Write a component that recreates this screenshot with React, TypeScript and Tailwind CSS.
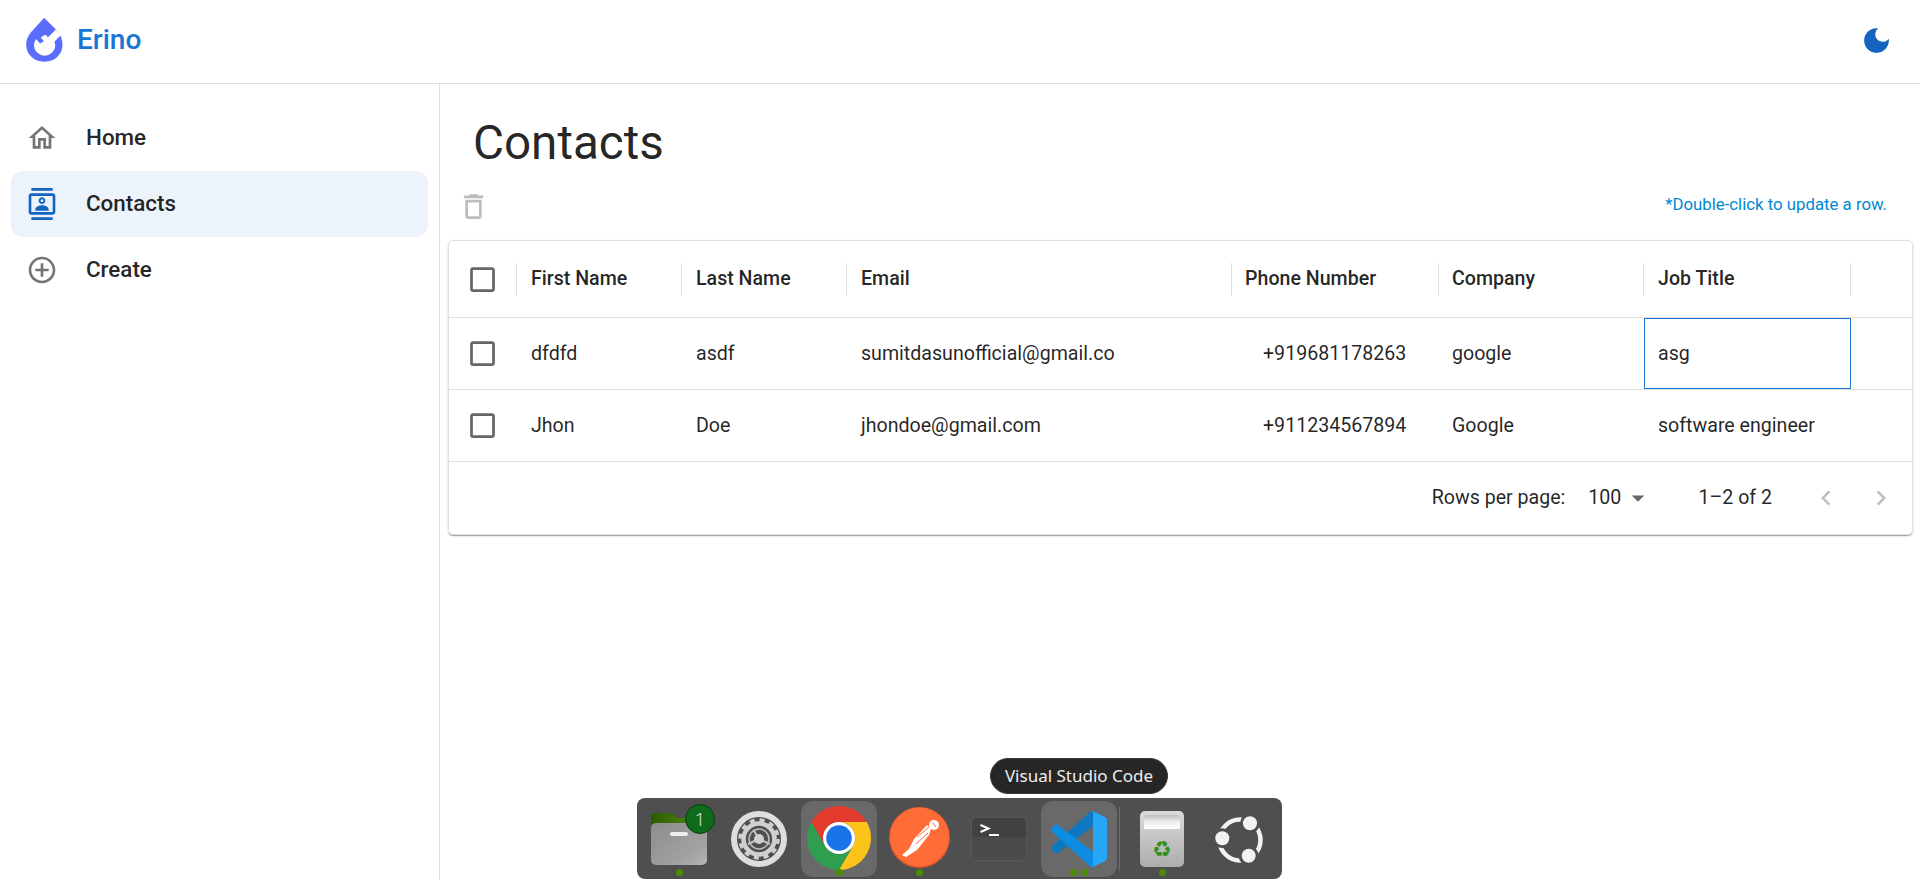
import { ReactNode } from "react";

const MuiIcon = ({ d, className }: { d: string; className: string }) => (
  <svg viewBox="0 0 24 24" fill="currentColor" className={className}>
    <path d={d} />
  </svg>
);

const checkboxPath =
  "M19 5v14H5V5h14m0-2H5c-1.1 0-2 .9-2 2v14c0 1.1.9 2 2 2h14c1.1 0 2-.9 2-2V5c0-1.1-.9-2-2-2z";

const navItems = [
  {
    label: "Home",
    color: "text-[#757575]",
    d: "m12 5.69 5 4.5V18h-2v-6H9v6H7v-7.81l5-4.5M12 3 2 12h3v8h6v-6h2v6h6v-8h3L12 3z",
  },
  {
    label: "Contacts",
    active: true,
    color: "text-[#1565c0]",
    d: "M20 0H4v2h16V0zM4 24h16v-2H4v2zM20 4H4c-1.1 0-2 .9-2 2v12c0 1.1.9 2 2 2h16c1.1 0 2-.9 2-2V6c0-1.1-.9-2-2-2zm0 14H4V6h16v12zm-8-6c1.38 0 2.5-1.12 2.5-2.5S13.38 7 12 7 9.5 8.12 9.5 9.5 10.62 12 12 12zm0-3.5c.55 0 1 .45 1 1s-.45 1-1 1-1-.45-1-1 .45-1 1-1zM17 15.99C17 13.9 13.69 13 12 13s-5 .9-5 2.99V17h10v-1.01z",
  },
  {
    label: "Create",
    color: "text-[#757575]",
    d: "M13 7h-2v4H7v2h4v4h2v-4h4v-2h-4V7zm-1-5C6.48 2 2 6.48 2 12s4.48 10 10 10 10-4.48 10-10S17.52 2 12 2zm0 18c-4.41 0-8-3.59-8-8s3.59-8 8-8 8 3.59 8 8-3.59 8-8 8z",
  },
];

const columns = ["First Name", "Last Name", "Email", "Phone Number", "Company", "Job Title"];

const rows = [
  ["dfdfd", "asdf", "sumitdasunofficial@gmail.co", "+919681178263", "google", "asg"],
  ["Jhon", "Doe", "jhondoe@gmail.com", "+911234567894", "Google", "software engineer"],
];

const gridCols = "grid grid-cols-[68px_165px_165px_385px_207px_205px_207px_1fr]";

// drawn in the crop's coordinates, 3 units per pixel
const Logo = () => (
  <svg viewBox="18 15 111 133" className="h-[44px] w-[37px]">
    <path
      d="M72 15 L110 52 C122 64 128 80 128 95 C128 125 105 147 73 147 C42 147 18 125 18 95 C18 78 27 64 36 54 Z"
      fill="#5b6dfd"
    />
    <circle cx="74" cy="97" r="32" fill="#fff" />
    <path d="M84 73 L107 50 L124 66 L98 92 Z" fill="#fff" />
    <path d="M72 15 L107 50 L84 73 L76 65 L62 74 L72 85 L60 92 L42 72 Z" fill="#5b6dfd" />
  </svg>
);

const FolderIcon = () => (
  <svg viewBox="0 0 56 52" className="h-[52px] w-[56px]">
    <defs>
      <linearGradient id="fbody" x1="0" y1="0" x2="1" y2="1">
        <stop offset="0" stopColor="#8c8c8c" />
        <stop offset="0.75" stopColor="#a3a3a3" />
        <stop offset="1" stopColor="#b5b5b5" />
      </linearGradient>
      <linearGradient id="ftab" x1="0" y1="0" x2="1" y2="0">
        <stop offset="0" stopColor="#2a5c02" />
        <stop offset="1" stopColor="#5a8f14" />
      </linearGradient>
    </defs>
    <path d="M0 4a4 4 0 0 1 4-4h17l6 5h25a4 4 0 0 1 4 4v10H0z" fill="url(#ftab)" />
    <rect x="0" y="10" width="56" height="42" rx="5" fill="url(#fbody)" />
    <rect x="19" y="19" width="18" height="4" rx="2" fill="#eee" />
  </svg>
);

const GearIcon = () => (
  <svg viewBox="0 0 56 56" className="h-[56px] w-[56px]">
    <circle cx="28" cy="28" r="25" fill="none" stroke="#dedede" strokeWidth="6" />
    <circle cx="28" cy="28" r="15.5" fill="none" stroke="#d0d0d0" strokeWidth="4.5" />
    <circle cx="28" cy="28" r="19" fill="none" stroke="#d0d0d0" strokeWidth="3.5" strokeDasharray="5 4.95" />
    <circle cx="28" cy="28" r="10" fill="none" stroke="#bdbdbd" strokeWidth="1.5" />
    <path d="M22.5 19 L28 28 L17 33 M39 33 L28 28" stroke="#c4c4c4" strokeWidth="2" fill="none" />
    <circle cx="28" cy="28" r="5" fill="#cfcfcf" />
  </svg>
);

const ChromeIcon = () => {
  const sector = "M32 0A32 32 0 0 1 59.7 16H32A16 16 0 0 0 18.1 40L4.3 16A32 32 0 0 1 32 0Z";
  return (
    <svg viewBox="0 0 64 64" className="-mt-[2px] h-[64px] w-[64px]">
      <path d={sector} fill="#e33b2e" />
      <path d={sector} fill="#fcc318" transform="rotate(120 32 32)" />
      <path d={sector} fill="#2f9e4f" transform="rotate(240 32 32)" />
      <circle cx="32" cy="32" r="16" fill="#fff" />
      <circle cx="32" cy="32" r="12.8" fill="#1a73e8" />
    </svg>
  );
};

const PostmanIcon = () => (
  <svg viewBox="0 0 61 61" className="-mt-[3px] h-[61px] w-[61px]">
    <circle cx="30.5" cy="30.5" r="30.5" fill="#e0562a" />
    <circle cx="30.5" cy="30" r="29.5" fill="#ff6c37" />
    <path d="M38 18 L25 32 L20 42 L13 48 L17 50 L28 43 L40 28 L42 21.5 Z" fill="#fff" />
    <circle cx="45" cy="18" r="5" fill="#fff" />
    <path d="M28 30 L40 20 M27 37 L39 26 M43.5 15.5 L47 20" stroke="#ff6c37" strokeWidth="1" fill="none" />
  </svg>
);

const TerminalIcon = () => (
  <svg viewBox="0 0 56 44" className="h-[44px] w-[56px]">
    <rect x="0.5" y="0.5" width="55" height="43" rx="5" fill="#4a4a4a" stroke="#585858" />
    <path d="M1 20V5.5a4.5 4.5 0 0 1 4.5-4.5h45a4.5 4.5 0 0 1 4.5 4.5V20z" fill="#414141" />
    <path d="M9.5 8 L17.5 11.5 L9.5 15" stroke="#fff" strokeWidth="2" fill="none" />
    <rect x="18" y="17" width="10" height="2" fill="#fff" />
  </svg>
);

const VscodeIcon = () => (
  <svg viewBox="0 0 100 100" className="h-[56px] w-[56px]">
    <path
      d="M96.4614 10.7962L75.8569 0.875542C73.4719 -0.272773 70.6217 0.211611 68.75 2.08333L1.29858 63.5832C-0.515693 65.2373 -0.513607 68.0937 1.30308 69.7452L6.81272 74.754C8.29793 76.1042 10.5347 76.2036 12.1338 74.9905L93.3609 13.3699C96.086 11.3026 100 13.2462 100 16.6667V16.4275C100 14.0265 98.6246 11.8378 96.4614 10.7962Z"
      fill="#0d78c0"
    />
    <path
      d="M96.4614 89.2038L75.8569 99.1245C73.4719 100.273 70.6217 99.7884 68.75 97.9167L1.29858 36.4169C-0.515693 34.7627 -0.513607 31.9063 1.30308 30.2548L6.81272 25.246C8.29793 23.8958 10.5347 23.7964 12.1338 25.0095L93.3609 86.6301C96.086 88.6974 100 86.7538 100 83.3334V83.5726C100 85.9735 98.6246 88.1622 96.4614 89.2038Z"
      fill="#0c8de2"
    />
    <path
      d="M75.8578 99.1263C73.4721 100.274 70.6219 99.7885 68.75 97.9166C71.0564 100.223 75 98.5895 75 95.3278V4.67213C75 1.41039 71.0564 -0.223106 68.75 2.08329C70.6219 0.211402 73.4721 -0.273666 75.8578 0.873633L96.4587 10.7807C98.6234 11.8217 100 14.0112 100 16.4132V83.5871C100 85.9891 98.6234 88.1786 96.4586 89.2196L75.8578 99.1263Z"
      fill="#26a6f7"
    />
  </svg>
);

const TrashIcon = () => (
  <div className="relative flex h-[56px] w-[44px] items-end justify-center overflow-hidden rounded-[5px] bg-gradient-to-b from-[#dadada] to-[#adadad]">
    <div className="absolute left-[4px] right-[4px] top-[4px] h-[14px] rounded-t-[3px] bg-gradient-to-b from-[#bdbdbd] via-[#eeeeee] to-[#ffffff]" />
    <span className="pb-[3px] font-['DejaVu_Sans'] text-[22px] leading-[28px] text-[#2f8f1f]">♻</span>
  </div>
);

const UbuntuIcon = () => (
  <svg viewBox="0 0 48 48" className="h-[48px] w-[48px] overflow-visible">
    <circle cx="22" cy="25" r="20.5" fill="none" stroke="#f2f2f2" strokeWidth="4.5" />
    <circle cx="4.3" cy="23.3" r="10" fill="#4f4f4f" />
    <circle cx="32" cy="8.3" r="10" fill="#4f4f4f" />
    <circle cx="30.7" cy="40.7" r="10" fill="#4f4f4f" />
    <circle cx="4.3" cy="23.3" r="7" fill="#f2f2f2" />
    <circle cx="32" cy="8.3" r="7" fill="#f2f2f2" />
    <circle cx="30.7" cy="40.7" r="7" fill="#f2f2f2" />
  </svg>
);

const DockItem = ({
  children,
  active,
  dots = 0,
}: {
  children: ReactNode;
  active?: boolean;
  dots?: number;
}) => (
  <div className="flex w-[80px] justify-center">
    <div
      className={`relative flex h-[76px] w-[76px] items-center justify-center rounded-[12px] ${
        active ? "bg-[#696969]" : ""
      }`}
    >
      {children}
      {dots > 0 && (
        <div className="absolute bottom-[1px] left-0 right-0 flex justify-center gap-[4px]">
          {Array.from({ length: dots }).map((_, i) => (
            <span key={i} className="h-[7px] w-[7px] rounded-full bg-[#4c8c05]" />
          ))}
        </div>
      )}
    </div>
  </div>
);

const Dock = () => (
  <div className="absolute bottom-[1px] left-[637px] flex h-[81px] w-[645px] items-start rounded-[8px] bg-[#4f4f4f] pl-[2px] pt-[3px]">
    <DockItem dots={1}>
      <FolderIcon />
      <span className="absolute left-[44px] top-[3px] flex h-[30px] w-[30px] items-center justify-center rounded-full border border-[#0a3d10] bg-[#0e6b1c] font-['Open_Sans'] text-[19px] font-light text-[#e8e8e8]">
        1
      </span>
    </DockItem>
    <DockItem>
      <GearIcon />
    </DockItem>
    <DockItem active dots={1}>
      <ChromeIcon />
    </DockItem>
    <DockItem dots={1}>
      <PostmanIcon />
    </DockItem>
    <DockItem>
      <TerminalIcon />
    </DockItem>
    <DockItem active dots={2}>
      <VscodeIcon />
    </DockItem>
    <div className="flex h-[76px] w-[3px] items-center">
      <div className="h-[64px] w-[1px] bg-[#6e6e6e]" />
    </div>
    <DockItem dots={1}>
      <TrashIcon />
    </DockItem>
    <DockItem>
      <UbuntuIcon />
    </DockItem>
  </div>
);

export default function App() {
  return (
    <div className="relative flex h-[880px] w-[1920px] flex-col overflow-hidden bg-white font-['Roboto'] text-[#000000de]">
      <header className="flex h-[84px] shrink-0 items-center justify-between border-b border-[#e0e0e0] pb-[3px] pl-[26px] pr-[27px]">
        <div className="flex items-center gap-[14px]">
          <Logo />
          <span className="text-[28px] font-medium text-[#1976d2]">Erino</span>
        </div>
        <MuiIcon
          className="h-[33px] w-[33px] text-[#1565c0]"
          d="M12 3c-4.97 0-9 4.03-9 9s4.03 9 9 9 9-4.03 9-9c0-.46-.04-.92-.1-1.36-.98 1.37-2.58 2.26-4.4 2.26-2.98 0-5.4-2.42-5.4-5.4 0-1.81.89-3.42 2.26-4.4-.44-.06-.9-.1-1.36-.1z"
        />
      </header>

      <div className="flex flex-1">
        <aside className="w-[440px] shrink-0 border-r border-[#e0e0e0] pl-[11px] pr-[11px] pt-[21px]">
          {navItems.map((item) => (
            <div
              key={item.label}
              className={`flex h-[66px] items-center rounded-[12px] pl-[15px] ${
                item.active ? "bg-[#ecf3fb]" : ""
              }`}
            >
              <MuiIcon className={`h-[32px] w-[32px] ${item.color}`} d={item.d} />
              <span className="ml-[28px] text-[22.4px] font-medium">{item.label}</span>
            </div>
          ))}
        </aside>

        <main className="min-w-0 flex-1 pl-[8px] pr-[7px]">
          <h1 className="pl-[25px] pt-[29px] text-[47.6px] font-normal leading-[60px]">Contacts</h1>

          <div className="mt-[16px] flex h-[34px] items-center justify-between pr-[26px]">
            <MuiIcon
              className="ml-[9px] h-[33px] w-[33px] text-[#00000042]"
              d="M6 19c0 1.1.9 2 2 2h8c1.1 0 2-.9 2-2V7H6v12zM8 9h8v10H8V9zm7.5-5-1-1h-5l-1 1H5v2h14V4z"
            />
            <span className="pb-[2px] text-[16.8px] text-[#0288d1]">*Double-click to update a row.</span>
          </div>

          <div className="mt-[17px] rounded-[5px] border border-[#e0e0e0] shadow-[0_2px_1px_-1px_rgba(0,0,0,0.2),0_1px_1px_0_rgba(0,0,0,0.14),0_1px_3px_0_rgba(0,0,0,0.12)]">
            <div className={`${gridCols} h-[77px] items-center border-b border-[#e0e0e0]`}>
              <div className="flex h-[33px] items-center border-r border-[#e0e0e0] pl-[17px]">
                <MuiIcon className="h-[33px] w-[33px] text-[#00000099]" d={checkboxPath} />
              </div>
              {columns.map((col, c) => (
                <div
                  key={col}
                  className={`flex h-[33px] items-center border-r border-[#e0e0e0] text-[19.6px] font-medium ${
                    c === 3 || c === 4 ? "pl-[13px]" : "pl-[14px]"
                  }`}
                >
                  {col}
                </div>
              ))}
            </div>

            {rows.map((row, r) => (
              <div key={r} className={`${gridCols} h-[72px] items-stretch border-b border-[#e0e0e0]`}>
                <div className="flex items-center pl-[17px]">
                  <MuiIcon className="h-[33px] w-[33px] text-[#00000099]" d={checkboxPath} />
                </div>
                {row.map((cell, c) => (
                  <div
                    key={c}
                    className={`flex items-center text-[19.6px] ${
                      c === 3 ? "pl-[31px]" : c === 4 ? "pl-[13px]" : "pl-[14px]"
                    } ${r === 0 && c === 5 ? "border border-[#1976d2] !pl-[13px]" : ""}`}
                  >
                    {cell}
                  </div>
                ))}
              </div>
            ))}

            <div className="flex h-[72px] items-center justify-end text-[19.6px]">
              <span>Rows per page:</span>
              <span className="ml-[23px]">100</span>
              <svg viewBox="0 0 24 24" fill="currentColor" className="ml-[2px] h-[30px] w-[30px] text-[#00000099]">
                <path d="m7 10 5 5 5-5z" />
              </svg>
              <span className="ml-[45px]">1–2 of 2</span>
              <MuiIcon
                className="ml-[39px] h-[30px] w-[30px] text-[#00000042]"
                d="M15.41 7.41 14 6l-6 6 6 6 1.41-1.41L10.83 12z"
              />
              <MuiIcon
                className="ml-[25px] mr-[16px] h-[30px] w-[30px] text-[#00000042]"
                d="M10 6 8.59 7.41 13.17 12l-4.58 4.59L10 18l6-6z"
              />
            </div>
          </div>
        </main>
      </div>

      <div className="absolute left-[990px] top-[758px] flex h-[36px] w-[178px] items-center justify-center rounded-full border border-[#3a3a3a] bg-[#262626] font-['Noto_Sans'] text-[17px] text-[#eeeeee]">
        Visual Studio Code
      </div>
      <Dock />
    </div>
  );
}
